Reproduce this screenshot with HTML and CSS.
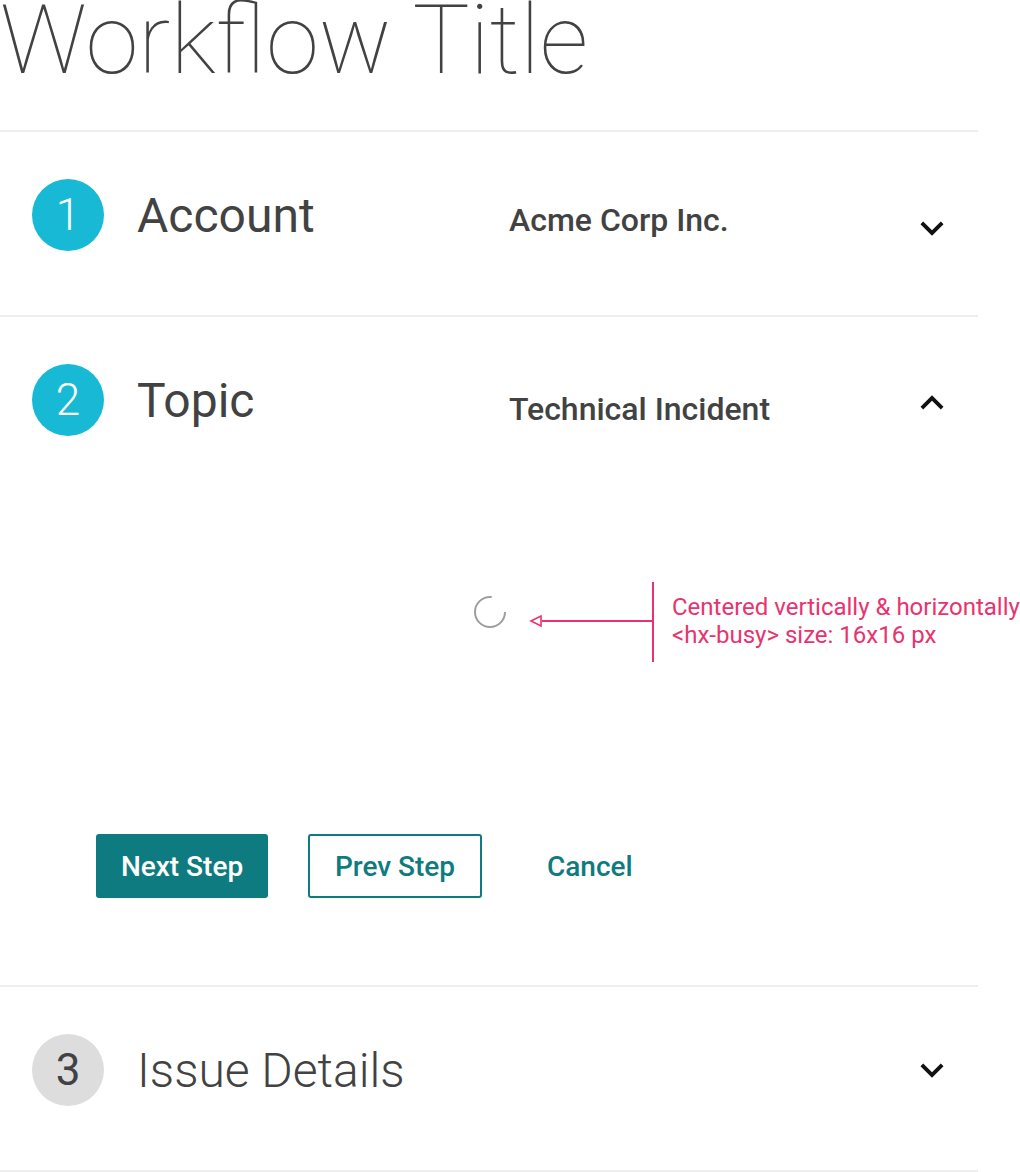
FILE: index.html
```html
<!DOCTYPE html>
<html lang="en">
<head>
<meta charset="utf-8">
<title>Workflow</title>
<link rel="stylesheet" href="styles.css">
</head>
<body>
<div class="page">
  <h1 class="title">Workflow Title</h1>

  <section class="step">
    <div class="step-head">
      <div class="badge badge-active">1</div>
      <div class="step-name">Account</div>
      <div class="step-value">Acme Corp Inc.</div>
      <svg class="chevron chevron-down" viewBox="0 0 24 24" width="46" height="46"><path d="M16.59 8.59L12 13.170 7.41 8.59 6 10l6 6 6-6z"/></svg>
    </div>
  </section>

  <section class="step step-open">
    <div class="step-head">
      <div class="badge badge-active">2</div>
      <div class="step-name">Topic</div>
      <div class="step-value step-value-open">Technical Incident</div>
      <svg class="chevron chevron-up" viewBox="0 0 24 24" width="46" height="46"><path d="M7.41 15.41L12 10.83l4.59 4.58L18 14l-6-6-6 6z"/></svg>
    </div>
    <div class="step-body">
      <svg class="spinner" viewBox="0 0 34 34" width="34" height="34"><circle cx="17" cy="17" r="15" fill="none" stroke="#9e9e9e" stroke-width="2" stroke-dasharray="72 100"/></svg>
      <div class="note">
        <svg class="note-lines" viewBox="0 0 130 82" width="130" height="82"><line x1="124" y1="0" x2="124" y2="80" stroke="#e8336f" stroke-width="2"/><line x1="13" y1="39" x2="124" y2="39" stroke="#e8336f" stroke-width="2"/><polygon points="2,39 12,34 12,44" fill="#fff" stroke="#e8336f" stroke-width="1.6"/></svg>
        <div class="note-text">Centered vertically &amp; horizontally<br>&lt;hx-busy&gt; size: 16x16 px</div>
      </div>
    </div>
    <div class="actions">
      <button class="btn btn-primary">Next Step</button>
      <button class="btn btn-outline">Prev Step</button>
      <button class="btn btn-link">Cancel</button>
    </div>
  </section>

  <section class="step">
    <div class="step-head">
      <div class="badge badge-idle">3</div>
      <div class="step-name step-name-idle">Issue Details</div>
      <div class="step-value"></div>
      <svg class="chevron" viewBox="0 0 24 24" width="46" height="46"><path d="M16.59 8.59L12 13.17 7.41 8.59 6 10l6 6 6-6z"/></svg>
    </div>
  </section>
</div>
</body>
</html>
```

FILE: styles.css
```css
* { box-sizing: border-box; }
html, body { margin: 0; padding: 0; background: #fff; }
body { font-family: Roboto, "Noto Sans", "Liberation Sans", sans-serif; color: #424242; }

.page { width: 978px; }

.title {
  margin: -16px 0 34px 0;
  font-size: 96px;
  font-weight: 100;
  line-height: 112px;
  color: #424242;
  white-space: nowrap;
}

.step {
  border-top: 2px solid #eeeeee;
  padding: 47px 0 64px 0;
}
.step:last-child { border-bottom: 2px solid #eeeeee; }
.step-open { padding-bottom: 87px; }

.step-head {
  display: flex;
  align-items: center;
  height: 72px;
  padding-left: 32px;
}

.badge {
  width: 72px;
  height: 72px;
  border-radius: 50%;
  display: flex;
  align-items: center;
  justify-content: center;
  font-size: 44px;
  font-weight: 300;
  flex: none;
}
.badge-active { background: #17b9d5; color: #fff; }
.badge-idle { background: #dddddd; color: #424242; font-weight: 400; }

.step-name {
  margin-left: 33px;
  width: 372px;
  font-size: 48px;
  font-weight: 400;
  color: #424242;
  white-space: nowrap;
}
.step-name-idle { font-weight: 300; }

.step-value {
  flex: 1;
  font-size: 32px;
  font-weight: 500;
  color: #424242;
  padding-top: 10px;
  white-space: nowrap;
}
.step-value-open { padding-top: 18px; }

.chevron { flex: none; margin-right: 23px; fill: #111; }
.chevron-down { margin-top: 26px; }
.chevron-up { margin-top: 6px; }

.step-body {
  position: relative;
  height: 352px;
  display: flex;
  align-items: center;
  justify-content: center;
}
.spinner { display: block; margin-left: 2px; }

.note {
  position: absolute;
  left: 529px;
  top: 146px;
}
.note-lines { display: block; }
.note-text {
  position: absolute;
  left: 143px;
  top: 11px;
  font-size: 24px;
  line-height: 28px;
  color: #e8336f;
  white-space: nowrap;
}

.actions {
  display: flex;
  align-items: center;
  margin-top: 46px;
  padding-left: 96px;
}
.btn {
  font-family: Roboto, "Noto Sans", sans-serif;
  font-size: 28px;
  font-weight: 500;
  height: 64px;
  border-radius: 3px;
  padding: 0;
  cursor: pointer;
}
.btn-primary {
  width: 172px;
  background: #0e7b80;
  color: #fff;
  border: none;
}
.btn-outline {
  width: 174px;
  margin-left: 40px;
  background: #fff;
  color: #0e7b80;
  border: 2px solid #0e7b80;
}
.btn-link {
  margin-left: 65px;
  background: none;
  border: none;
  color: #0e7b80;
}
```
